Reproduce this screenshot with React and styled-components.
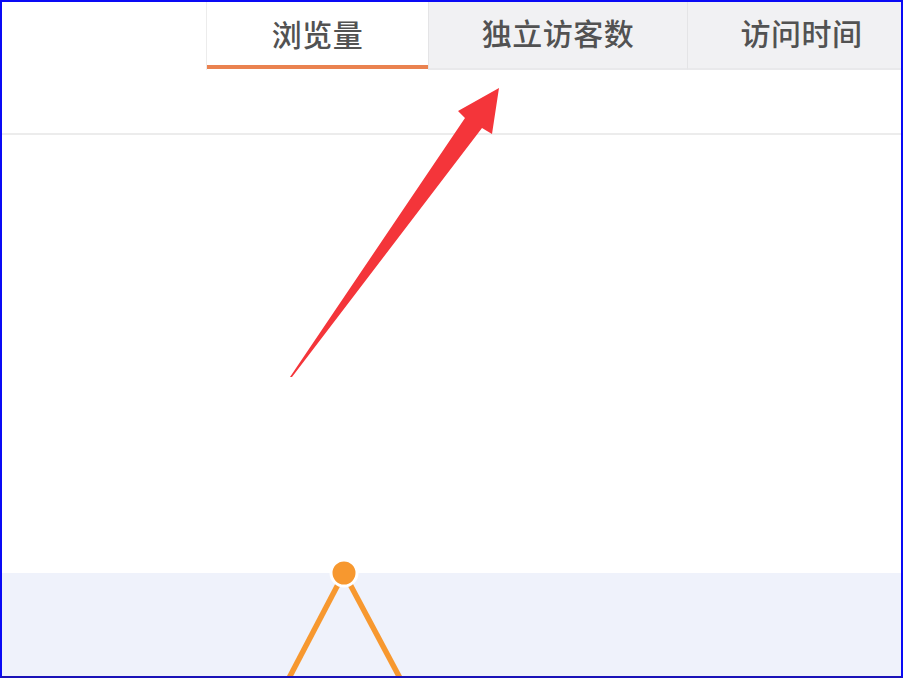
import styled, { createGlobalStyle } from "styled-components";

const GlobalStyle = createGlobalStyle`
  html, body {
    margin: 0;
    padding: 0;
    background: #fff;
  }
  body {
    font-family: "Noto Sans CJK SC", "Noto Sans", sans-serif;
  }
`;

const Frame = styled.div`
  position: relative;
  width: 903px;
  height: 678px;
  box-sizing: border-box;
  border: 2px solid #0a0af5;
  border-bottom-color: #1a12b8;
  background: #fff;
  overflow: hidden;
  display: flex;
  flex-direction: column;
`;

const TabBar = styled.div`
  display: flex;
  flex-direction: row;
  padding-left: 204px;
  height: 68px;
  flex-shrink: 0;
`;

const Tab = styled.div`
  position: relative;
  flex-shrink: 0;
  width: ${(p) => p.$width}px;
  display: flex;
  align-items: center;
  justify-content: center;
  box-sizing: border-box;
  padding-bottom: 6px;
  font-size: 30px;
  font-weight: 500;
  letter-spacing: 0.5px;
  color: #525252;
  background: ${(p) => (p.$active ? "#fff" : "#f1f1f3")};
  border-left: 1px solid ${(p) => (p.$active ? "#ececec" : "#e4e4e6")};
  border-bottom: ${(p) => (p.$active ? "none" : "2px solid #e9e9eb")};

  &::after {
    content: "";
    display: ${(p) => (p.$active ? "block" : "none")};
    position: absolute;
    left: 0;
    right: 0;
    bottom: 1px;
    height: 4px;
    background: #ea8250;
  }
`;

const Toolbar = styled.div`
  height: 63px;
  flex-shrink: 0;
  border-bottom: 2px solid #ececec;
`;

const Chart = styled.div`
  position: relative;
  flex: 1;
  display: flex;
  flex-direction: column;
`;

const Blank = styled.div`
  flex: 1;
`;

const Band = styled.div`
  height: 103px;
  background: #eff2fb;
`;

const ChartLayer = styled.svg`
  position: absolute;
  left: -2px;
  top: -135px;
  width: 903px;
  height: 678px;
  pointer-events: none;
`;

const Annotation = styled.svg`
  position: absolute;
  left: -2px;
  top: -2px;
  width: 903px;
  height: 678px;
  pointer-events: none;
`;

const tabs = [
  { label: "浏览量", width: 222, active: true },
  { label: "独立访客数", width: 259 },
  { label: "访问时间", width: 228 },
];

export default function App() {
  return (
    <>
      <GlobalStyle />
      <Frame>
        <TabBar>
          {tabs.map((t) => (
            <Tab key={t.label} $width={t.width} $active={t.active}>
              {t.label}
            </Tab>
          ))}
        </TabBar>
        <Toolbar />
        <Chart>
          <Blank />
          <Band />
          <ChartLayer viewBox="0 0 903 678">
            <line x1="344" y1="573" x2="288" y2="680" stroke="#f7982f" strokeWidth="5.5" />
            <line x1="344" y1="573" x2="401" y2="680" stroke="#f7982f" strokeWidth="5.5" />
            <circle cx="344" cy="573" r="13" fill="#f7982f" stroke="#fff" strokeWidth="3" />
          </ChartLayer>
        </Chart>
        <Annotation viewBox="0 0 903 678">
          <polygon
            points="290,377 465,118 458,111 499,88 492,134 482,128 292,377"
            fill="#f4353a"
          />
        </Annotation>
      </Frame>
    </>
  );
}
